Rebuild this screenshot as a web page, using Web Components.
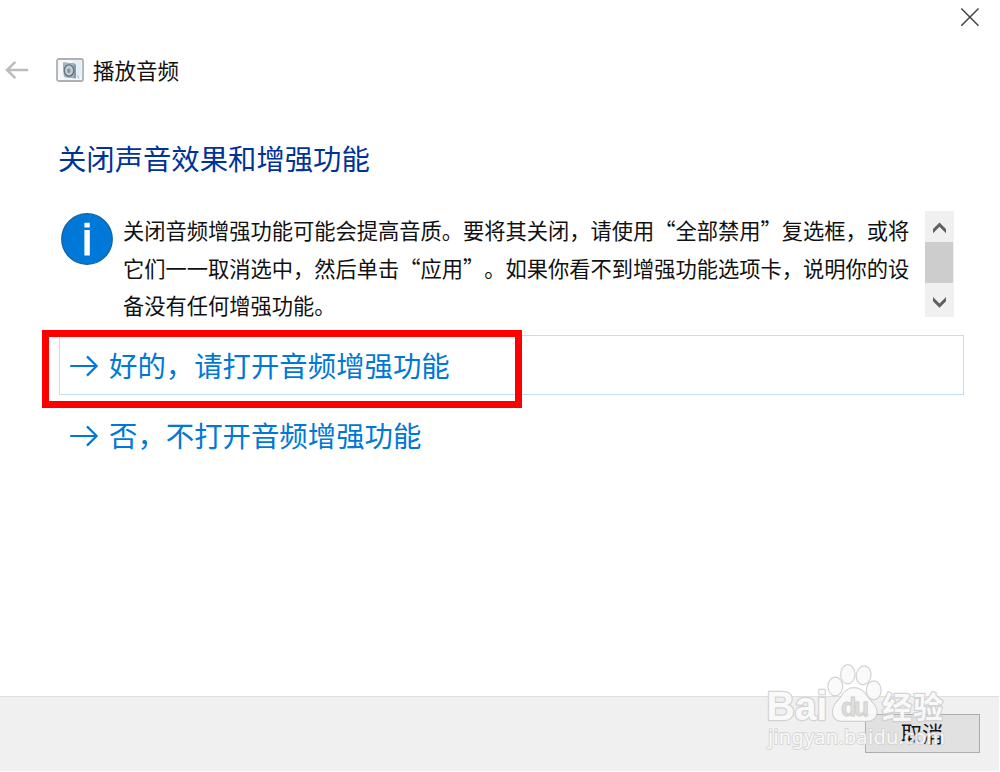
<!DOCTYPE html>
<html lang="zh-CN">
<head>
<meta charset="utf-8">
<title>播放音频</title>
<style>
  html,
  body {
    margin: 0;
    height: 100%;
    overflow: hidden;
    background: #fff;
  }

  body {
    font-family: "Noto Sans CJK SC", sans-serif;
    text-spacing-trim: space-all;
  }
</style>
</head>
<body>
<wizard-window>
  <wizard-header slot="header">播放音频</wizard-header>
  <span slot="title">关闭声音效果和增强功能</span>
  <info-message>关闭音频增强功能可能会提高音质。要将其关闭，请使用“全部禁用”复选框，或将<br>它们一一取消选中，然后单击“应用”。如果你看不到增强功能选项卡，说明你的设<br>备没有任何增强功能。</info-message>
  <command-link active marked>好的，请打开音频增强功能</command-link>
  <command-link>否，不打开音频增强功能</command-link>
  <wizard-button slot="footer">取消</wizard-button>
  <site-watermark slot="overlay"></site-watermark>
</wizard-window>

<script>
class WizardWindow extends HTMLElement {
  constructor() {
    super();
    this.attachShadow({ mode: "open" }).innerHTML = `
      <style>
        :host {
          position: relative;
          display: flex;
          flex-direction: column;
          box-sizing: border-box;
          width: 1000px;
          height: 772px;
          padding: 0 1px 1px 0;
          background: #fff;
          color: #111;
        }

        main {
          flex: 1;
          display: flex;
          flex-direction: column;
          padding: 51px 35px 0 59px;
        }

        h1 {
          margin: 0 0 32px;
          color: #003399;
          font-size: 28.35px;
          font-weight: 400;
          line-height: 42px;
          white-space: nowrap;
        }

        h1 slot {
          display: block;
          margin-left: -1px;
        }

        footer {
          box-sizing: border-box;
          display: flex;
          justify-content: flex-end;
          align-items: flex-start;
          height: 75px;
          padding: 17px 19px 0 0;
          border-top: 1px solid #dfdfdf;
          background: #f0f0f0;
        }
      </style>
      <slot name="header"></slot>
      <main>
        <h1><slot name="title"></slot></h1>
        <slot></slot>
      </main>
      <footer><slot name="footer"></slot></footer>
      <slot name="overlay"></slot>
    `;
  }
}

class WizardHeader extends HTMLElement {
  constructor() {
    super();
    this.attachShadow({ mode: "open" }).innerHTML = `
      <style>
        :host {
          display: block;
          font-size: 21.5px;
          line-height: 32px;
        }

        .close {
          display: flex;
          justify-content: flex-end;
          height: 54px;
          padding: 7px 19px 0 0;
          box-sizing: border-box;
        }

        .caption {
          display: flex;
          align-items: center;
          height: 32px;
          padding-left: 5px;
        }

        .app {
          margin: 0 9px 0 27px;
        }

        svg {
          display: block;
        }
      </style>
      <div class="close">
        <svg width="20" height="20" viewBox="0 0 20 20" fill="none" stroke="#444" stroke-width="1.5">
          <path d="M1.3 1.5 18.5 18.7M18.5 1.5 1.3 18.7"></path>
        </svg>
      </div>
      <div class="caption">
        <svg width="24" height="20" viewBox="0 0 24 20" fill="none" stroke="#bdbdbd" stroke-width="2.6">
          <path d="M1.8 10H23.2M10.3 1.8 2 10 10.3 18.2"></path>
        </svg>
        <svg class="app" width="28" height="24" viewBox="0 0 28 24">
          <rect x="1" y="1" width="26" height="22" rx="1.8" fill="#f5f7f8" stroke="#aeb1b4" stroke-width="1.8"></rect>
          <path d="M16 2.5h9v16l-4 2z" fill="#e3edf5"></path>
          <path d="M7 4.5 18 5.3 20 7v13.5L8 19z" fill="#8799a8"></path>
          <path d="M7 4.5 17.8 5.5V20L8 19z" fill="#a5b4c0"></path>
          <ellipse cx="13" cy="12.5" rx="4.7" ry="5.6" fill="#c3ced6" stroke="#5f7181" stroke-width="1.3"></ellipse>
          <ellipse cx="12.8" cy="12.8" rx="1.8" ry="2.2" fill="#8493a0"></ellipse>
          <path d="M21.5 17.5 23 20.5" stroke="#9bb8cd"></path>
        </svg>
        <div><slot></slot></div>
      </div>
    `;
  }
}

class InfoMessage extends HTMLElement {
  constructor() {
    super();
    this.attachShadow({ mode: "open" }).innerHTML = `
      <style>
        :host {
          display: flex;
          height: 106px;
          margin: 0 10px 18px 2px;
        }

        .icon {
          flex: none;
          margin: 2px 10px 0 0;
        }

        .text {
          flex: 1;
          height: 114px;
          font-size: 21.25px;
          line-height: 37.5px;
          white-space: nowrap;
        }

        .scrollbar {
          display: flex;
          flex-direction: column;
          justify-content: space-between;
          width: 29px;
          background: #f0f0f0;
        }

        .thumb {
          width: 28px;
          height: 41px;
          background: #cdcdcd;
        }

        svg {
          display: block;
        }
      </style>
      <svg class="icon" width="52" height="52" viewBox="0 0 52 52">
        <circle cx="26" cy="26" r="25.3" fill="#0078d7" stroke="#11609f" stroke-width="1.2"></circle>
        <path d="M23.4 9.8h5.4v4.6h-5.4zM23.4 17h5.4v25.4h-5.4z" fill="#fff"></path>
      </svg>
      <div class="text"><slot></slot></div>
      <div class="scrollbar">
        <svg width="29" height="30" viewBox="0 0 29 30" fill="#606060">
          <path d="M14.5 11.5 21 18v4.2l-6.5-6.5L8 22.2V18z"></path>
        </svg>
        <div class="thumb"></div>
        <svg width="29" height="34" viewBox="0 0 29 34" fill="#606060">
          <path d="M14.5 24.7 21 18.2V14l-6.5 6.5L8 14v4.2z"></path>
        </svg>
      </div>
    `;
  }
}

class CommandLink extends HTMLElement {
  constructor() {
    super();
    this.attachShadow({ mode: "open" }).innerHTML = `
      <style>
        :host {
          position: relative;
          display: flex;
          align-items: center;
          box-sizing: border-box;
          height: 60px;
          margin-bottom: 10px;
          padding-left: 11px;
          border: 1px solid transparent;
          color: #0078d7;
          font-size: 28.4px;
          line-height: 42px;
          white-space: nowrap;
        }

        :host([active]) {
          border-color: #c2def3;
        }

        /* red frame drawn round the recommended option */
        :host([marked])::after {
          content: "";
          position: absolute;
          top: -6px;
          left: -18px;
          width: 480px;
          height: 78px;
          box-sizing: border-box;
          border: 7px solid #f00;
        }

        svg {
          flex: none;
          margin: 2px 10px 0 -1px;
        }
      </style>
      <svg width="29" height="22" viewBox="0 0 29 22" fill="none" stroke="currentColor" stroke-width="2.2">
        <path d="M.2 11H26.6M17 1.4 26.6 11 17 20.6"></path>
      </svg>
      <slot></slot>
    `;
  }
}

class WizardButton extends HTMLElement {
  constructor() {
    super();
    this.attachShadow({ mode: "open" }).innerHTML = `
      <style>
        button {
          display: block;
          width: 115px;
          height: 39px;
          padding: 0 1px 1px 0;
          border: 1px solid #adadad;
          background: #e1e1e1;
          color: #111;
          font: inherit;
          font-size: 21.25px;
          line-height: 36px;
        }
      </style>
      <button type="button"><slot></slot></button>
    `;
  }
}

class SiteWatermark extends HTMLElement {
  constructor() {
    super();
    this.attachShadow({ mode: "open" }).innerHTML = `
      <style>
        :host {
          position: absolute;
          top: 660px;
          left: 760px;
          pointer-events: none;
        }

        svg {
          display: block;
        }

        .logo {
          fill: #fafafa;
          stroke: #cfcfcf;
          stroke-width: 2.4px;
          stroke-linejoin: round;
          paint-order: stroke;
        }

        .latin {
          font-family: "Liberation Sans", sans-serif;
          font-weight: 700;
        }

        .du {
          fill: #dcdcdc;
          stroke: #cbcbcb;
          stroke-width: .8px;
        }

        .url {
          fill: #fafafa;
          stroke: #d2d2d2;
          stroke-width: 1.8px;
          stroke-linejoin: round;
          paint-order: stroke;
          font-family: "Noto Sans", sans-serif;
        }
      </style>
      <svg width="200" height="95" viewBox="0 0 200 95" opacity=".9">
        <g class="logo">
          <text class="latin" x="6.5" y="60" font-size="40" textLength="61" lengthAdjust="spacingAndGlyphs">Bai</text>
          <ellipse cx="75.3" cy="26.5" rx="6.8" ry="8.8"></ellipse>
          <ellipse cx="87.8" cy="14.3" rx="6.6" ry="9"></ellipse>
          <ellipse cx="103.6" cy="15.3" rx="6.8" ry="8.8" transform="rotate(10 103.6 15.3)"></ellipse>
          <ellipse cx="113.7" cy="30.3" rx="6.8" ry="8.8"></ellipse>
          <path d="M94 28.3c7 0 10.5 4.4 13.5 9 3.4 5.2 9 7.9 9 14.5 0 6-4 9-9.5 9H82c-6 0-9-3.6-9-9 0-6.8 4.7-9.5 8-14.5 2.7-4.3 6.2-9 13-9z"></path>
          <text x="122" y="57.5" font-size="30" font-weight="700" textLength="61">经验</text>
        </g>
        <text class="latin du" x="81" y="56" font-size="25" textLength="28">du</text>
        <text class="url" x="8" y="84" font-size="20" textLength="177">jingyan.baidu.com</text>
      </svg>
    `;
  }
}

customElements.define("wizard-window", WizardWindow);
customElements.define("wizard-header", WizardHeader);
customElements.define("info-message", InfoMessage);
customElements.define("command-link", CommandLink);
customElements.define("wizard-button", WizardButton);
customElements.define("site-watermark", SiteWatermark);
</script>
</body>
</html>
